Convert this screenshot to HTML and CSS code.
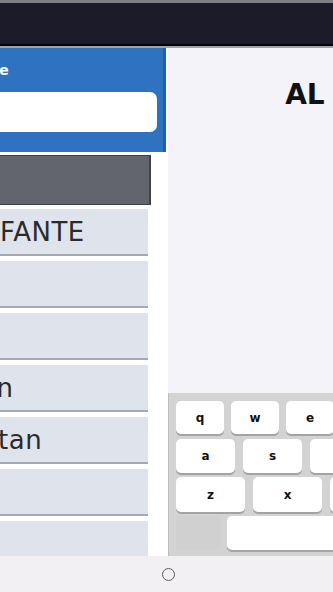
FILE: index.html
```html
<!DOCTYPE html>
<html lang="es">

<head>
    <title>Al día</title>
    <link rel="stylesheet" href="styles.css">
</head>

<body>
    <div class="statusbar"></div>
    <div class="app">
        <aside class="sidebar">
            <div class="search">
                <label for="q">Lote</label>
                <input type="text" id="q" autocomplete="off">
            </div>
            <ul class="list">
                <li class="head"></li>
                <li>INFANTE</li>
                <li>Li</li>
                <li>Jo</li>
                <li>Jon</li>
                <li>Altan</li>
                <li>Ji</li>
                <li>Li</li>
            </ul>
        </aside>
        <main class="pane">
            <h1 class="title">AL DÍA</h1>
            <div class="keyboard">
                <div class="row r1">
                    <span class="key">q</span>
                    <span class="key">w</span>
                    <span class="key">e</span>
                    <span class="key">r</span>
                </div>
                <div class="row r2">
                    <span class="key">a</span>
                    <span class="key">s</span>
                    <span class="key">d</span>
                </div>
                <div class="row r3">
                    <span class="key">z</span>
                    <span class="key">x</span>
                    <span class="key">c</span>
                </div>
                <div class="row r4">
                    <span class="key blank"></span>
                    <span class="key space"></span>
                </div>
            </div>
        </main>
    </div>
    <div class="navbar"><span class="home"></span></div>
</body>

</html>
```

FILE: styles.css
```css
* {
    box-sizing: border-box;
}

body {
    margin: 0;
    width: 333px;
    height: 592px;
    overflow: hidden;
    background: #fff;
    font-family: "DejaVu Sans", sans-serif;
}

.statusbar {
    height: 46px;
    background: #1b1b29;
    border-top: 3px solid #7e7e86;
    border-bottom: 2px solid #050507;
}

.app {
    display: flex;
    height: 510px;
    border-top: 2px solid #a2a2aa;
    overflow: hidden;
}

.sidebar {
    flex: 0 0 208px;
    margin-left: -40px;
    background: #fff;
    overflow: hidden;
}

.search {
    display: flex;
    flex-direction: column;
    height: 104px;
    margin-right: 2px;
    padding: 12px 6px 20px 14px;
    background: #2e72c0;
    border-right: 3px solid #1f5fab;

    & label {
        height: 20px;
        color: #fff;
        font-weight: bold;
        font-size: 14px;
        line-height: 20px;
    }

    & input {
        height: 40px;
        margin-top: 12px;
        border: none;
        border-radius: 7px;
        background: #fff;
        outline: none;
    }
}

.list {
    list-style: none;
    margin: 3px 0 0;
    padding: 0;

    & li {
        display: flex;
        align-items: center;
        height: 47px;
        margin: 0 20px 5px 0;
        padding-left: 12px;
        background: #dfe4ec;
        border-bottom: 2px solid #a5aab2;
        color: #2b2b2b;
        font-size: 26px;
        letter-spacing: 0.5px;
        white-space: nowrap;
    }

    & .head {
        height: 50px;
        margin: 0 17px 4px 0;
        background: #62646e;
        border: 1px solid #3f4148;
        border-right-width: 2px;
    }
}

.pane {
    display: flex;
    flex-direction: column;
    flex: 0 0 363px;
    background: #f3f3f9;
}

.title {
    margin: 30px 0 0;
    text-align: center;
    font-size: 28px;
    line-height: 33px;
    color: #111;
    white-space: nowrap;
}

.keyboard {
    display: flex;
    flex-direction: column;
    gap: 4px;
    height: 163px;
    margin-top: auto;
    padding: 8px 0 6px 7px;
    background: #d3d3d3;
    border-left: 1px solid #bdbdbd;

    .row {
        display: flex;
        height: 34px;
    }

    .r1 {
        height: 33px;
        gap: 7px;
        margin-bottom: 1px;

        & .key {
            width: 48px;
        }
    }

    .r2 {
        gap: 8px;

        & .key {
            width: 59px;
        }
    }

    .r3 {
        height: 35px;
        gap: 8px;

        & .key {
            width: 69px;
        }
    }

    .r4 {
        gap: 6px;
    }
}

.key {
    display: flex;
    align-items: center;
    justify-content: center;
    flex-shrink: 0;
    background: #fff;
    border-radius: 5px;
    box-shadow: 0 2px 0 #a3a3a3;
    color: #111;
    font-size: 12px;
    font-weight: bold;

    &.blank {
        width: 45px;
        background: #d0d0d0;
        box-shadow: none;
    }

    &.space {
        width: 250px;
    }
}

.navbar {
    display: flex;
    align-items: center;
    justify-content: center;
    height: 36px;
    padding-left: 3px;
    background: #f2f0f3;
}

.home {
    width: 13px;
    height: 13px;
    border: 1.5px solid #5c5c5c;
    border-radius: 50%;
}
```
